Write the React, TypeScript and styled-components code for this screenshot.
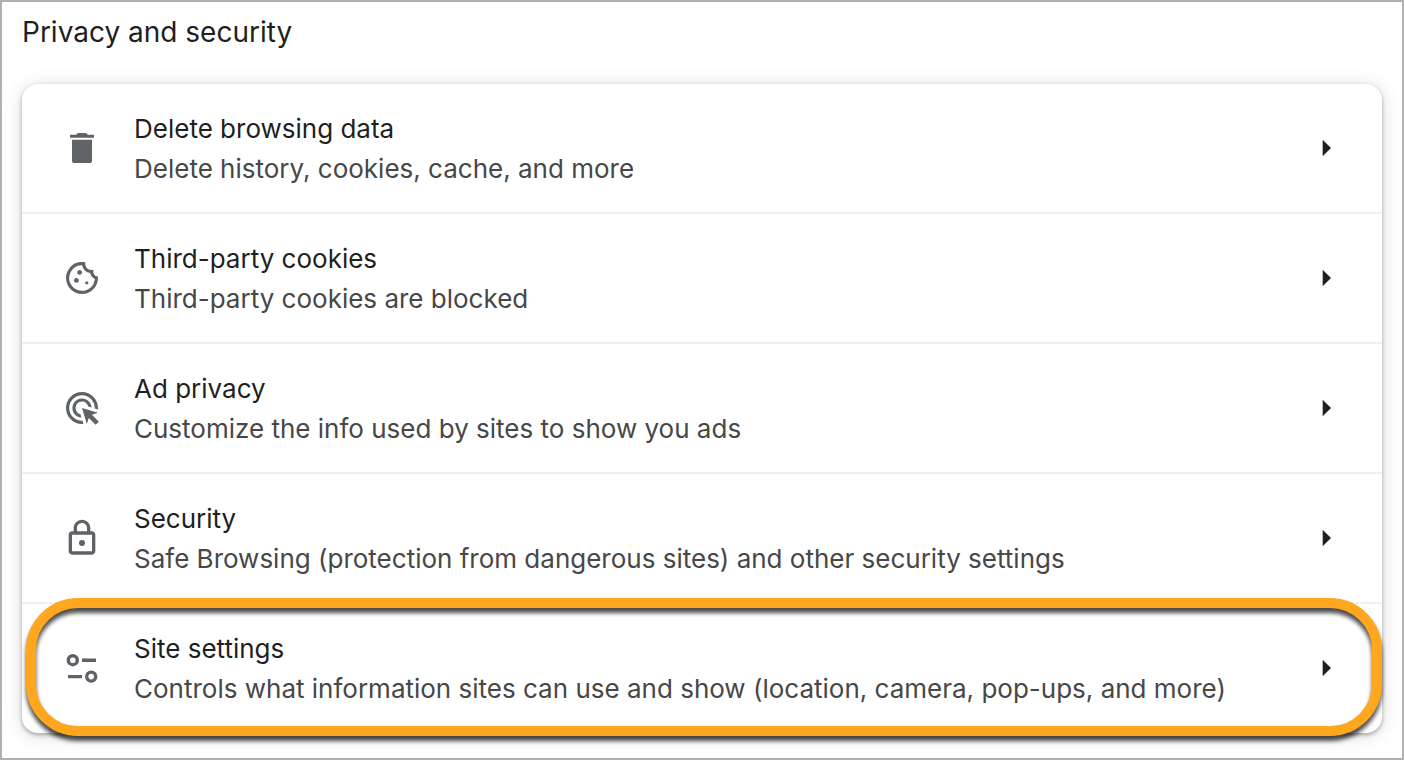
import React from "react";
import styled, { createGlobalStyle } from "styled-components";

const GlobalStyle = createGlobalStyle`
  * { box-sizing: border-box; }
  body {
    margin: 0;
    background: #fff;
    font-family: Inter, Roboto, "Liberation Sans", sans-serif;
  }
`;

const Page = styled.main`
  min-height: 100vh;
  padding: 10px 20px 24px;
  border: 2px solid #b0b0b0;
  background: #fff;
`;

const Heading = styled.h1`
  margin: 0 0 32px;
  font-size: 28px;
  font-weight: 400;
  line-height: 40px;
  color: #1f1f1f;
`;

const Card = styled.ul`
  margin: 0;
  padding: 0 0 1px;
  list-style: none;
  border-radius: 16px;
  background: #fff;
  box-shadow: 0 2px 4px rgba(0, 0, 0, 0.3), 0 2px 20px rgba(0, 0, 0, 0.14);
`;

const Item = styled.li`
  position: relative;

  & + & {
    border-top: 2px solid #efefef;
  }
`;

const Row = styled.button`
  display: flex;
  align-items: center;
  gap: 32px;
  width: 100%;
  padding: 23px 36px 23px 40px;
  border: 0;
  border-radius: 16px;
  background: transparent;
  font: inherit;
  text-align: left;
  cursor: pointer;
`;

const Icon = styled.svg<{ $color: string }>`
  flex: none;
  width: 40px;
  height: 40px;
  fill: ${(p) => p.$color};
`;

const Labels = styled.span`
  flex: 1;
  min-width: 0;
  padding-top: 2px;
`;

const Label = styled.span<{ $muted?: boolean }>`
  display: block;
  font-size: 26px;
  line-height: 40px;
  color: ${(p) => (p.$muted ? "#474747" : "#1f1f1f")};
`;

const Highlight = styled.span`
  position: absolute;
  inset: -6px 0 -4px 4px;
  border: 10px solid #ffa71f;
  border-radius: 52px;
  filter: drop-shadow(0 5px 2px rgba(0, 0, 0, 0.7));
  pointer-events: none;
`;

const GREY = "#5f6368";

const TrashIcon = () => (
  <Icon $color={GREY} viewBox="0 0 24 24" aria-hidden="true">
    <path d="M6 19.6c0 .8.6 1.4 1.4 1.4h9.2c.8 0 1.4-.6 1.4-1.4V7H6v12.6zM19.2 4h-3.7l-1-1h-5l-1 1H4.8v1.9h14.4V4z" />
  </Icon>
);

const CookieIcon = () => (
  <Icon $color={GREY} viewBox="-20 -980 1000 1000" aria-hidden="true">
    <path d="M480-80q-83 0-156-31.5T197-197q-54-54-85.5-127T80-480q0-75 29-147t81-128.5q52-56.5 125-91T475-881q21 0 43 2t45 7q-9 45 6 85t45 66.5q30 26.5 71.5 36.5t85.5-5q-26 59 7.5 113t99.5 56q1 11 1.5 20.5t.5 20.5q0 82-31.5 154.5t-85.5 127q-54 54.5-127 86T480-80Zm-60-480q25 0 42.5-17.5T480-620q0-25-17.5-42.5T420-680q-25 0-42.5 17.5T360-620q0 25 17.5 42.5T420-560Zm-80 200q25 0 42.5-17.5T400-420q0-25-17.5-42.5T340-480q-25 0-42.5 17.5T280-420q0 25 17.5 42.5T340-360Zm260 40q17 0 28.5-11.5T640-360q0-17-11.5-28.5T600-400q-17 0-28.5 11.5T560-360q0 17 11.5 28.5T600-320ZM480-160q122 0 216.5-84T800-458q-50-22-78.5-60T683-603q-77-11-132-66t-68-132q-80-2-140.5 29t-101 79.5Q201-644 180.5-587T160-480q0 133 93.5 226.5T480-160Z" />
  </Icon>
);

const AdIcon = () => (
  <Icon $color={GREY} viewBox="-0.5 -0.5 25 25" aria-hidden="true">
    <path d="M11.71 17.99C8.53 17.84 6 15.22 6 12c0-3.31 2.69-6 6-6 3.22 0 5.84 2.53 5.99 5.71l-2.1-.63C15.48 9.31 13.89 8 12 8c-2.21 0-4 1.79-4 4 0 1.89 1.31 3.48 3.08 3.89l.63 2.1zM22 12c0 .3-.01.6-.04.9l-1.97-.59c.01-.1.01-.21.01-.31 0-4.42-3.58-8-8-8s-8 3.58-8 8 3.58 8 8 8c.1 0 .21 0 .31-.01l.59 1.97c-.3.03-.6.04-.9.04-5.52 0-10-4.48-10-10S6.48 2 12 2s10 4.48 10 10zm-3.77 4.26L22 15l-10-3 3 10 1.26-3.77 4.27 4.27 1.98-1.98-4.28-4.26z" />
  </Icon>
);

const LockIcon = () => (
  <Icon $color={GREY} viewBox="0 0 24 24" aria-hidden="true">
    <path d="M18 8h-1V6c0-2.76-2.24-5-5-5S7 3.24 7 6v2H6c-1.1 0-2 .9-2 2v10c0 1.1.9 2 2 2h12c1.1 0 2-.9 2-2V10c0-1.1-.9-2-2-2zM9 6c0-1.66 1.34-3 3-3s3 1.34 3 3v2H9V6zm9 14H6V10h12v10z" />
    <circle cx="12" cy="15" r="1.8" />
  </Icon>
);

const SettingsIcon = () => (
  <Icon $color="none" viewBox="0 0 40 40" aria-hidden="true">
    <g stroke={GREY} strokeWidth="3.4">
      <circle cx="10.8" cy="12.2" r="4.5" />
      <path d="M20 12.2h14M6 28.6h14" />
      <circle cx="29.2" cy="28.6" r="4.5" />
    </g>
  </Icon>
);

const ArrowIcon = () => (
  <Icon $color="#1f1f1f" viewBox="0 0 24 24" aria-hidden="true">
    <path d="M10 7l5 5-5 5z" />
  </Icon>
);

const items = [
  { icon: TrashIcon, title: "Delete browsing data", detail: "Delete history, cookies, cache, and more" },
  { icon: CookieIcon, title: "Third-party cookies", detail: "Third-party cookies are blocked" },
  { icon: AdIcon, title: "Ad privacy", detail: "Customize the info used by sites to show you ads" },
  { icon: LockIcon, title: "Security", detail: "Safe Browsing (protection from dangerous sites) and other security settings" },
  {
    icon: SettingsIcon,
    title: "Site settings",
    detail: "Controls what information sites can use and show (location, camera, pop-ups, and more)",
    highlighted: true,
  },
];

export default function App() {
  return (
    <>
      <GlobalStyle />
      <Page>
        <Heading>Privacy and security</Heading>
        <Card>
          {items.map(({ icon: ItemIcon, title, detail, highlighted }) => (
            <Item key={title}>
              <Row type="button">
                <ItemIcon />
                <Labels>
                  <Label>{title}</Label>
                  <Label $muted>{detail}</Label>
                </Labels>
                <ArrowIcon />
              </Row>
              {highlighted && <Highlight />}
            </Item>
          ))}
        </Card>
      </Page>
    </>
  );
}
